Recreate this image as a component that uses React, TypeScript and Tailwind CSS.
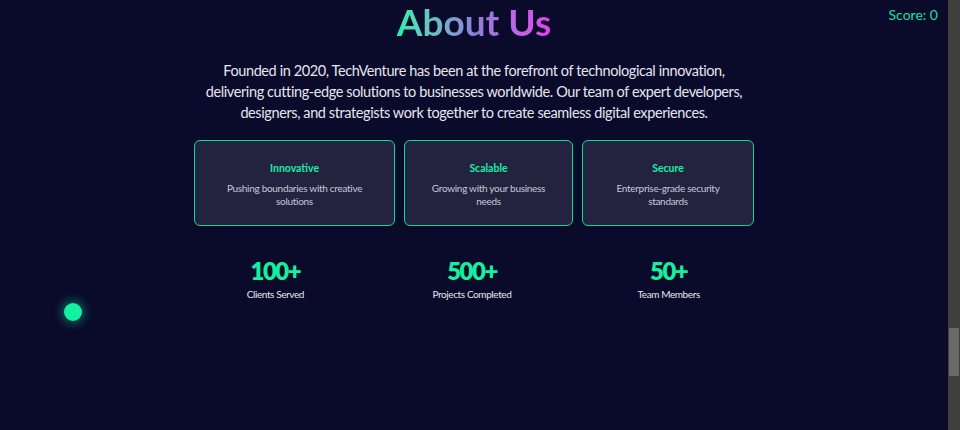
import React from 'react';

const features = [
  { title: 'Innovative', text: ['Pushing boundaries with creative', 'solutions'], w: 'w-[201px]' },
  { title: 'Scalable', text: ['Growing with your business', 'needs'], w: 'w-[169px]' },
  { title: 'Secure', text: ['Enterprise-grade security', 'standards'], w: 'w-[172px]' },
];

const stats = [
  { value: '100+', label: 'Clients Served' },
  { value: '500+', label: 'Projects Completed' },
  { value: '50+', label: 'Team Members' },
];

export default function App() {
  return (
    <div className="flex h-[430px] w-[960px] overflow-hidden bg-[#0a0a2a] font-['Lato',sans-serif]">
      <main className="relative flex-1">
        <div className="absolute right-[10px] top-[4px] text-[14px] text-[#16e0a0]">Score: 0</div>

        <section className="flex flex-col items-center">
          <h1 className="bg-gradient-to-r from-[#14f0a8] via-[#8a7fd8] to-[#e23ff0] bg-clip-text pb-[2px] text-[37px] font-bold leading-[44px] text-transparent">
            About Us
          </h1>

          <p className="mt-[14px] text-center text-[14.5px] leading-[21px] tracking-[-0.4px] text-[#e6e6f0]">
            Founded in 2020, TechVenture has been at the forefront of technological innovation,
            <br />
            delivering cutting-edge solutions to businesses worldwide. Our team of expert developers,
            <br />
            designers, and strategists work together to create seamless digital experiences.
          </p>

          <div className="mt-[17px] flex gap-[9px]">
            {features.map((f) => (
              <div
                key={f.title}
                className={`${f.w} flex h-[86px] flex-col items-center justify-center rounded-[6px] border border-[#12d992] bg-[#232340] pt-[2px] text-center`}
              >
                <div className="text-[10.5px] font-bold leading-[14px] text-[#14f0a0]">{f.title}</div>
                <div className="mt-[7px] text-[10px] leading-[13px] tracking-[-0.3px] text-[#c8c8d8]">
                  {f.text[0]}
                  <br />
                  {f.text[1]}
                </div>
              </div>
            ))}
          </div>

          <div className="mt-[30px] grid w-[590px] grid-cols-3 -translate-x-[2px]">
            {stats.map((s) => (
              <div key={s.label} className="flex flex-col items-center">
                <div className="text-[24px] font-extrabold leading-[30px] tracking-[-1.5px] text-[#14f0a0]">{s.value}</div>
                <div className="mt-[1px] text-[10px] leading-[14px] tracking-[-0.4px] text-[#e6e6f0]">{s.label}</div>
              </div>
            ))}
          </div>
        </section>

        <div className="absolute left-[64px] top-[303px] h-[18px] w-[18px] rounded-full bg-[#12f0a0] shadow-[0_0_10px_3px_rgba(18,240,160,0.35)]" />
      </main>

      <div className="flex w-[12px] flex-col bg-[#3f3f3f] pl-[1px] pr-[1px]">
        <div className="h-[328px]" />
        <div className="h-[48px] bg-[#6a6a6a]" />
      </div>
    </div>
  );
}
